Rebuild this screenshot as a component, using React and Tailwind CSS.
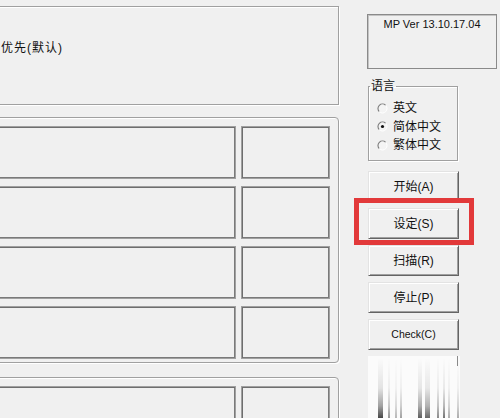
import React from "react";

const font = { fontFamily: '"Liberation Sans","Noto Sans CJK SC",sans-serif' };

function Cell({ className = "" }) {
  return (
    <div
      className={
        "h-[53px] border border-[#a0a0a0] shadow-[inset_1px_1px_0_#6e6e6e,inset_-1px_-1px_0_#7a7a7a] " +
        className
      }
    />
  );
}

function Row() {
  return (
    <div className="flex gap-[5px]">
      <Cell className="flex-1" />
      <Cell className="w-[89px]" />
    </div>
  );
}

function Radio({ checked }) {
  return (
    <svg width="11" height="11" viewBox="0 0 11 11" className="shrink-0">
      <circle cx="5.5" cy="5.5" r="4.5" fill="#f4f4f4" />
      <path d="M2.3 8.7 A4.5 4.5 0 0 1 8.7 2.3" fill="none" stroke="#7a7a7a" strokeWidth="1.1" />
      <path d="M8.7 2.3 A4.5 4.5 0 0 1 2.3 8.7" fill="none" stroke="#ffffff" strokeWidth="1" />
      {checked && <circle cx="5.5" cy="5.5" r="1.6" fill="#111" />}
    </svg>
  );
}

function Btn({ children, small }) {
  return (
    <div
      className={
        "h-[31px] flex items-center justify-center bg-[#f0f0f0] border border-t-[#e3e3e3] border-l-[#e3e3e3] border-b-[#646464] border-r-[#646464] shadow-[inset_1px_1px_0_#ffffff,inset_-1px_-1px_0_#a0a0a0] text-[#111] " +
        (small ? "text-[10.5px]" : "text-[12px]")
      }
    >
      {children}
    </div>
  );
}

function Watermark() {
  const bars = [
    [10, 5, 0.8],
    [20, 2, 0.45],
    [27, 2, 0.3],
    [32, 2, 0.4],
    [50, 4, 0.7],
    [57, 5, 0.65],
    [69, 2, 0.5],
    [75, 2, 0.6],
    [80, 2, 0.35],
    [89, 2, 0.35],
  ];
  return (
    <svg width="92" height="62" viewBox="0 0 92 62" className="block">
      <defs>
        <linearGradient id="wg" x1="0" y1="0" x2="0" y2="1">
          <stop offset="0" stopColor="#000" stopOpacity="0" />
          <stop offset="0.5" stopColor="#000" stopOpacity="0.12" />
          <stop offset="0.8" stopColor="#000" stopOpacity="0.45" />
          <stop offset="1" stopColor="#000" stopOpacity="0.9" />
        </linearGradient>
      </defs>
      <rect x="0" y="0" width="92" height="62" fill="#fbfbfb" />
      <rect x="89" y="0" width="1" height="10" fill="#8a8a8a" />
      {bars.map(([x, w, o], i) => (
        <rect key={i} x={x} y="2" width={w} height="60" fill="url(#wg)" opacity={o} />
      ))}
    </svg>
  );
}

export default function App() {
  return (
    <div
      className="relative w-[500px] h-[418px] overflow-hidden bg-[#f0f0f0] text-[12px] text-[#111] flex"
      style={font}
    >
      {/* left column */}
      <div className="ml-[-20px] w-[359px] shrink-0 flex flex-col pt-[6px]">
        <div className="h-[99px] shrink-0 border border-[#a0a0a0] shadow-[inset_1px_1px_0_#fff,1px_1px_0_#fff] pl-[20px] pt-[33px] leading-[16px] tracking-[1px]">
          优先(默认)
        </div>
        <div className="mt-[12px] h-[246px] shrink-0 rounded-[4px] border border-[#a0a0a0] shadow-[inset_1px_1px_0_#fff,1px_1px_0_#fff] pt-[8px] pr-[8px] pl-[10px] flex flex-col gap-[7px]">
          <Row />
          <Row />
          <Row />
          <Row />
        </div>
        <div className="mt-[14px] h-[120px] shrink-0 rounded-[4px] border border-[#a0a0a0] shadow-[inset_1px_1px_0_#fff,1px_1px_0_#fff] pt-[8px] pr-[8px] pl-[10px] flex flex-col gap-[7px]">
          <Row />
        </div>
      </div>

      {/* right column */}
      <div className="ml-[28px] w-[130px] shrink-0 flex flex-col pt-[14px]">
        <div className="h-[55px] shrink-0 border border-[#8a8a8a] shadow-[inset_1px_1px_0_#c4c4c4] flex justify-center pt-[2px] text-[11px] leading-[14px]">
          MP Ver 13.10.17.04
        </div>
        <fieldset className="ml-[1px] mt-[9px] w-[90px] h-[83px] shrink-0 border border-[#a0a0a0] shadow-[inset_1px_1px_0_#fff,1px_1px_0_#fff] px-0 pb-0 m-0">
          <legend className="ml-[1px] px-[1px] leading-[16px] text-[12px]">语言</legend>
          <div className="pt-[5px] pl-[8px] flex flex-col">
            <div className="h-[18px] flex items-center gap-[5px]">
              <Radio />
              <span>英文</span>
            </div>
            <div className="h-[19px] flex items-center gap-[5px]">
              <Radio checked />
              <span>简体中文</span>
            </div>
            <div className="h-[18px] flex items-center gap-[5px]">
              <Radio />
              <span>繁体中文</span>
            </div>
          </div>
        </fieldset>
        <div className="ml-[1px] w-[91px] mt-[10px] flex flex-col gap-[6px]">
          <Btn>开始(A)</Btn>
          <Btn>设定(S)</Btn>
          <Btn>扫描(R)</Btn>
          <Btn>停止(P)</Btn>
          <Btn small>Check(C)</Btn>
          <Watermark />
        </div>
      </div>

      {/* red highlight annotation */}
      <div className="absolute left-[354px] top-[198px] w-[120px] h-[47px] border-[5px] border-[#e2393a]" />
    </div>
  );
}
